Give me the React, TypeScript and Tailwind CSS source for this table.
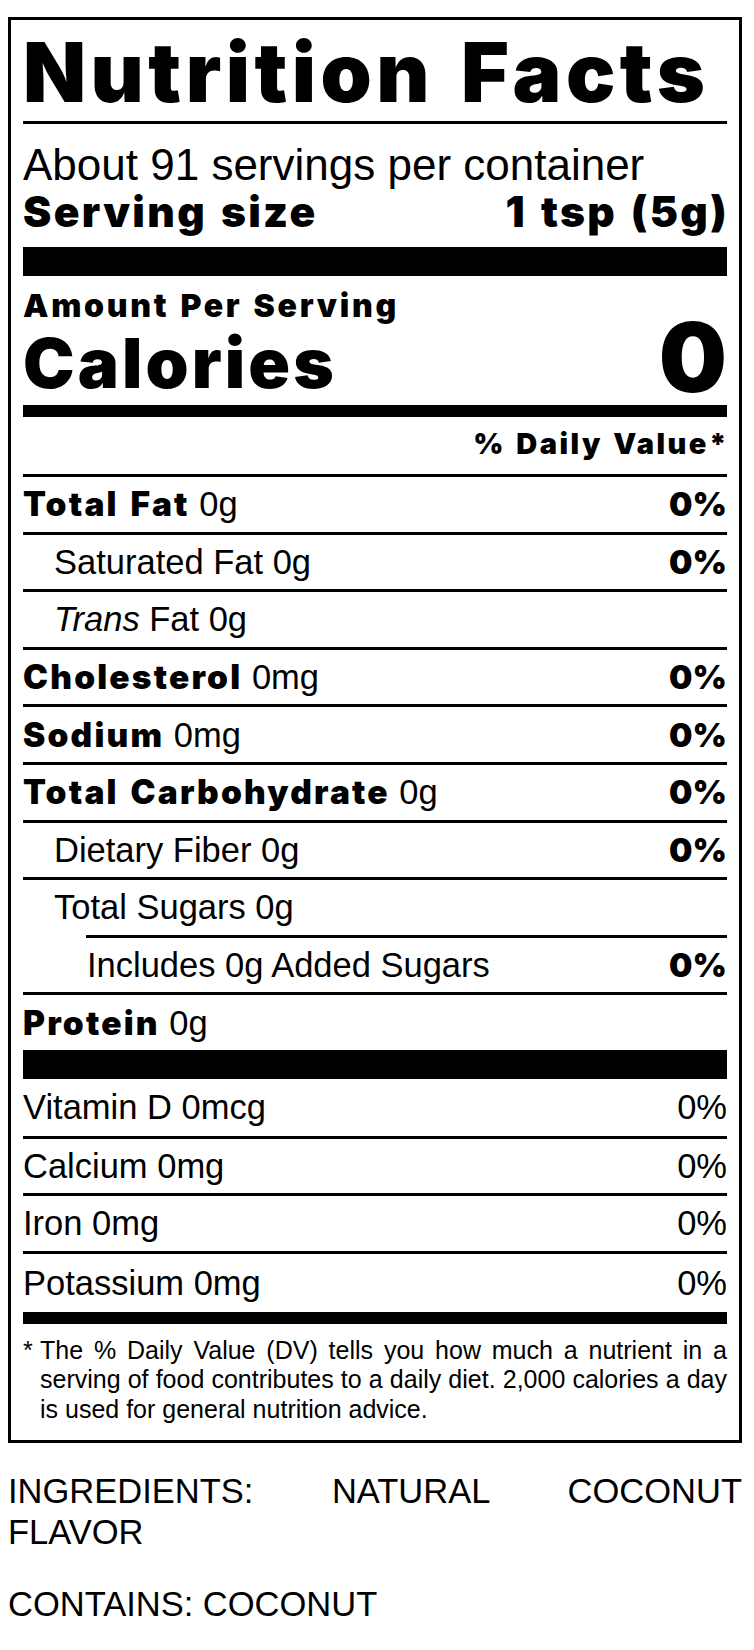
const bold = "font-['Inter',sans-serif] font-black";

type Row = { label: string; amount: string; dv?: string; indent?: 0 | 1 | 2; strong?: boolean; italic?: string; rule: 'full' | 'indent' | 'none' };

const nutrients: Row[] = [
  { label: 'Total Fat', amount: '0g', dv: '0%', strong: true, rule: 'full' },
  { label: 'Saturated Fat', amount: '0g', dv: '0%', indent: 1, rule: 'full' },
  { label: 'Fat', italic: 'Trans', amount: '0g', indent: 1, rule: 'full' },
  { label: 'Cholesterol', amount: '0mg', dv: '0%', strong: true, rule: 'full' },
  { label: 'Sodium', amount: '0mg', dv: '0%', strong: true, rule: 'full' },
  { label: 'Total Carbohydrate', amount: '0g', dv: '0%', strong: true, rule: 'full' },
  { label: 'Dietary Fiber', amount: '0g', dv: '0%', indent: 1, rule: 'full' },
  { label: 'Total Sugars', amount: '0g', indent: 1, rule: 'indent' },
  { label: 'Includes 0g Added Sugars', amount: '', dv: '0%', indent: 2, rule: 'full' },
  { label: 'Protein', amount: '0g', strong: true, rule: 'none' },
];

const vitamins = [
  { label: 'Vitamin D 0mcg', dv: '0%', h: 'h-[57px]' },
  { label: 'Calcium 0mg', dv: '0%', h: 'h-[54px]' },
  { label: 'Iron 0mg', dv: '0%', h: 'h-[55px]' },
  { label: 'Potassium 0mg', dv: '0%', h: 'h-[58px]' },
];

const indents = ['pl-0', 'pl-[31px]', 'pl-[64px]'];

export default function App() {
  return (
    <div className="min-h-[1650px] bg-white pt-[17px] pl-[8px] text-black font-['Liberation_Sans',Arial,sans-serif]">
      <div className="w-[734px] border-[3px] border-black px-[12px] pt-[12px] pb-[16px]">
        <div className={`h-[82px] whitespace-nowrap text-[82px] leading-[82px] tracking-[0.055em] [word-spacing:6px] ${bold}`}>Nutrition Facts</div>
        <div className="mt-[7px] h-[3px] bg-black" />
        <div className="mt-[19px] h-[43px] whitespace-nowrap text-[44px] leading-[43px]">About 91 servings per container</div>
        <div className={`mt-[4px] flex h-[43px] justify-between whitespace-nowrap text-[42.5px] leading-[43px] tracking-[0.055em] [word-spacing:3px] ${bold}`}>
          <span>Serving size</span>
          <span className="-mr-[2px]">1 tsp (5g)</span>
        </div>
        <div className="mt-[14px] h-[29px] bg-black" />

        <div className={`mt-[13px] h-[33px] whitespace-nowrap text-[32px] leading-[33px] tracking-[0.085em] [word-spacing:2px] ${bold}`}>Amount Per Serving</div>
        <div className={`flex h-[70px] justify-between ${bold}`}>
          <span className="mt-[16px] text-[69px] leading-[50px] tracking-[0.045em]">Calories</span>
          <span className="text-[96px] leading-[70px]">0</span>
        </div>
        <div className="mt-[13px] h-[12px] bg-black" />
        <div className={`mt-[12px] -mr-[2px] h-[29px] whitespace-nowrap text-right text-[29px] leading-[29px] tracking-[0.085em] [word-spacing:2px] ${bold}`}>% Daily Value*</div>
        <div className="mt-[16px] h-[3px] bg-black" />

        {nutrients.map((n) => (
          <div key={n.label}>
            <div className={`flex h-[54.6px] items-center justify-between whitespace-nowrap text-[34.5px] leading-[34px] ${indents[n.indent ?? 0]}`}>
              <span>
                {n.italic && <i>{n.italic} </i>}
                {n.strong ? <span className={`text-[33.5px] tracking-[0.065em] [word-spacing:3px] ${bold}`}>{n.label}</span> : n.label}
                {n.amount && ` ${n.amount}`}
              </span>
              {n.dv && <span className={`text-[33px] ${bold}`}>{n.dv}</span>}
            </div>
            {n.rule === 'full' && <div className="h-[3px] bg-black" />}
            {n.rule === 'indent' && <div className="ml-[63px] h-[3px] bg-black" />}
          </div>
        ))}
        <div className="h-[29px] bg-black" />

        {vitamins.map((v, i) => (
          <div key={v.label}>
            <div className={`flex items-center justify-between text-[34.5px] leading-[34px] ${v.h}`}>
              <span>{v.label}</span>
              <span>{v.dv}</span>
            </div>
            {i < vitamins.length - 1 && <div className="h-[3px] bg-black" />}
          </div>
        ))}
        <div className="h-[12px] bg-black" />

        <div className="mt-[12px] flex text-[25px] leading-[29.5px]">
          <span className="w-[17px] shrink-0">*</span>
          <div className="flex-1">
            <div className="whitespace-nowrap text-justify [text-align-last:justify]">The % Daily Value (DV) tells you how much a nutrient in a</div>
            <div className="whitespace-nowrap text-justify [text-align-last:justify]">serving of food contributes to a daily diet. 2,000 calories a day</div>
            <div>is used for general nutrition advice.</div>
          </div>
        </div>
      </div>

      <div className="mt-[28px] w-[734px] text-[34.5px] leading-[41px]">
        <div className="whitespace-nowrap text-justify [text-align-last:justify]">INGREDIENTS: NATURAL COCONUT</div>
        <div>FLAVOR</div>
      </div>
      <div className="mt-[31px] text-[34.5px] leading-[41px]">CONTAINS: COCONUT</div>
    </div>
  );
}
